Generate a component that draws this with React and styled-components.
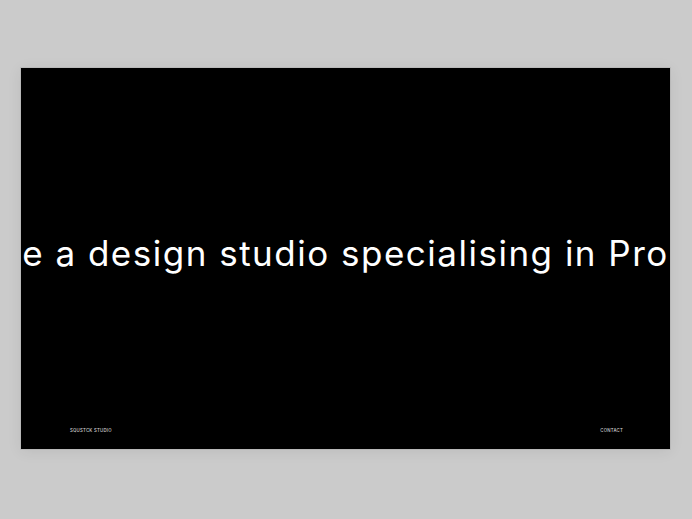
import React from 'react'
import styled, { createGlobalStyle } from 'styled-components'

const Global = createGlobalStyle`
  html, body {
    margin: 0;
    padding: 0;
    background: #cbcbcb;
  }
  body {
    font-family: 'Inter', 'Liberation Sans', sans-serif;
  }
`

const Page = styled.div`
  padding: 68px 22px 70px 21px;
`

const Screen = styled.div`
  height: 381px;
  background: #000;
  display: flex;
  flex-direction: column;
  box-shadow: 0 0 0 1px #b9b9b9, 0 2px 14px rgba(0, 0, 0, 0.08);
  overflow: hidden;
`

const Hero = styled.div`
  flex: 1;
  display: flex;
  align-items: center;
  justify-content: center;
  overflow: hidden;
  padding-top: 11px;
`

const Headline = styled.h1`
  margin: 0;
  white-space: nowrap;
  color: #fff;
  font-weight: 400;
  font-size: 35px;
  letter-spacing: 1.5px;
  line-height: 1;
`

const Footer = styled.div`
  display: flex;
  justify-content: space-between;
  padding: 0 47px 16px 49px;
`

const FootLink = styled.a`
  color: #d4d4d4;
  font-size: 4.3px;
  letter-spacing: 0.25px;
  text-transform: uppercase;
  text-decoration: none;
  font-weight: 500;
`

export default function App() {
  return (
    <>
      <Global />
      <Page>
        <Screen>
          <Hero>
            <Headline>e a design studio specialising in Pro</Headline>
          </Hero>
          <Footer>
            <FootLink>Squstck Studio</FootLink>
            <FootLink>Contact</FootLink>
          </Footer>
        </Screen>
      </Page>
    </>
  )
}
